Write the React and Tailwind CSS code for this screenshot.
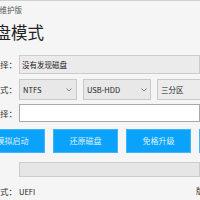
import React from "react";

function Chevron() {
  return (
    <svg width="6" height="4" viewBox="0 0 6 4" className="shrink-0">
      <polyline points="0.5,0.5 3,3 5.5,0.5" fill="none" stroke="#777" strokeWidth="0.9" />
    </svg>
  );
}

function Label({ children }) {
  return (
    <div className="w-[78px] shrink-0 flex justify-end pr-[2px] whitespace-nowrap text-[8.5px] text-[#333]">
      {children}
    </div>
  );
}

export default function App() {
  return (
    <div
      className="w-[200px] h-[200px] overflow-hidden bg-[#f5f5f5] border-t border-[#cfcfcf]"
      style={{ fontFamily: '"Noto Sans CJK SC", "Noto Sans", sans-serif' }}
    >
      <div className="-ml-[59px]">
        <div className="mt-[4px] ml-[59px] w-[22px] flex justify-end whitespace-nowrap text-[7.5px] leading-[10px] text-[#555]">
          <span className="-ml-[100px]">U盘启动盘制作工具维护版</span>
        </div>
        <div className="mt-[7px] ml-[59px] w-[44px] flex justify-end whitespace-nowrap text-[16.5px] leading-[21px] text-[#222]">
          <span className="-ml-[60px]">U盘模式</span>
        </div>

        <div className="mt-[12px] flex items-center">
          <Label>设备选择：</Label>
          <div className="flex-1 h-[19px] bg-[#ebebeb] border border-[#cccccc] flex items-center px-[2px] text-[7.5px] text-[#222] whitespace-nowrap">
            没有发现磁盘
          </div>
        </div>

        <div className="mt-[5px] flex items-center">
          <Label>启动模式：</Label>
          <div className="flex gap-[6px] items-center whitespace-nowrap text-[7.5px] text-[#222]">
            <div className="w-[58px] h-[21px] bg-[#e8e8e8] border border-[#c9c9c9] flex items-center justify-between pl-[3px] pr-[4px]">
              <span>NTFS</span>
              <Chevron />
            </div>
            <div className="w-[68px] h-[21px] bg-[#e8e8e8] border border-[#c9c9c9] flex items-center justify-between pl-[3px] pr-[3px]">
              <span>USB-HDD</span>
              <Chevron />
            </div>
            <div className="w-[70px] h-[21px] bg-[#ececec] border border-[#c9c9c9] flex items-center pl-[3px]">
              <span>三分区</span>
            </div>
          </div>
        </div>

        <div className="mt-[4px] flex items-center">
          <Label>文件选择：</Label>
          <div className="flex-1 h-[18px] bg-white border border-[#a9a9a9]" />
        </div>

        <div className="mt-[7px] ml-[39px] flex gap-[8px] whitespace-nowrap text-[8px] text-[#dff0ff]">
          <div className="w-[65px] h-[24px] shrink-0 bg-[#0aa2fa] border border-[#3db4fb] flex items-center justify-center">模拟启动</div>
          <div className="w-[65px] h-[24px] shrink-0 bg-[#0aa2fa] border border-[#3db4fb] flex items-center justify-center">还原磁盘</div>
          <div className="w-[65px] h-[24px] shrink-0 bg-[#0aa2fa] border border-[#3db4fb] flex items-center justify-center">免格升级</div>
          <div className="w-[65px] h-[24px] shrink-0 bg-[#0aa2fa] border border-[#3db4fb] flex items-center justify-center">一键制作</div>
        </div>

        <div className="mt-[9px] flex items-center">
          <div className="w-[78px] shrink-0" />
          <div className="flex-1 h-[15px] bg-[#e6e6e6] border border-[#cccccc]" />
        </div>

        <div className="mt-[8px] flex items-center whitespace-nowrap">
          <Label>启动方式：</Label>
          <span className="text-[7.5px] text-[#222]">UEFI</span>
          <div className="flex-1" />
          <span className="w-[44px] -mr-[40px] text-[8px] text-[#222]">版本号</span>
        </div>
      </div>
    </div>
  );
}
